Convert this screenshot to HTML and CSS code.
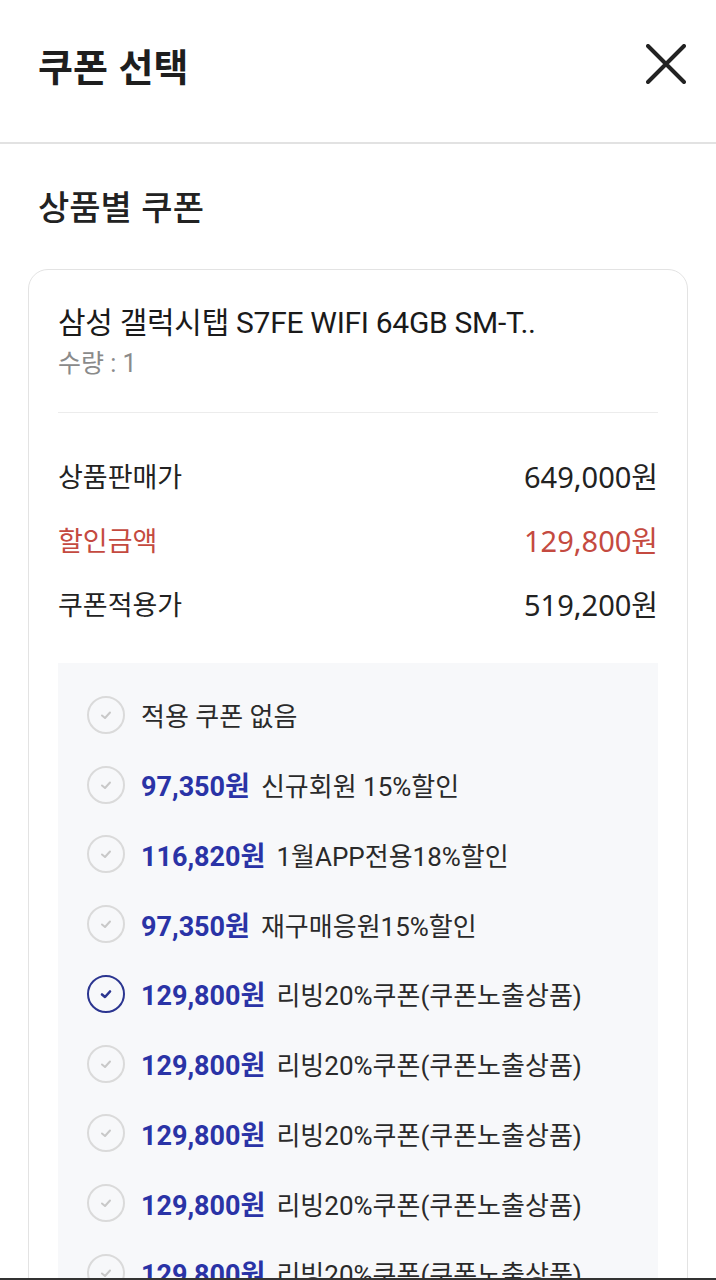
FILE: index.html
```html
<!DOCTYPE html>
<html lang="ko">
<head>
<meta charset="utf-8">
<title>쿠폰 선택</title>
<link rel="stylesheet" href="styles.css">
</head>
<body>
<header class="header">
  <h1 class="header-title">쿠폰 선택</h1>
  <button class="close-btn" aria-label="닫기">
    <svg width="40" height="40" viewBox="0 0 40 40"><path d="M2 2 L38 38 M38 2 L2 38" stroke="#222" stroke-width="4" stroke-linecap="round" fill="none"/></svg>
  </button>
</header>
<main class="content">
  <h2 class="section-title">상품별 쿠폰</h2>
  <section class="card">
    <div class="product">
      <div class="product-name">삼성 갤럭시탭 S7FE WIFI 64GB SM-T..</div>
      <div class="product-qty">수량 : 1</div>
    </div>
    <div class="prices">
      <div class="price-row"><span>상품판매가</span><span class="val">649,000원</span></div>
      <div class="price-row discount"><span>할인금액</span><span class="val">129,800원</span></div>
      <div class="price-row"><span>쿠폰적용가</span><span class="val">519,200원</span></div>
    </div>
    <ul class="coupons">
      <li class="coupon"><span class="check"><svg viewBox="0 0 20 20"><path d="M6 10.5 L9 13 L14 7.5"/></svg></span><span class="coupon-name">적용 쿠폰 없음</span></li>
      <li class="coupon"><span class="check"><svg viewBox="0 0 20 20"><path d="M6 10.5 L9 13 L14 7.5"/></svg></span><b class="amount">97,350원</b><span class="coupon-name">신규회원 15%할인</span></li>
      <li class="coupon"><span class="check"><svg viewBox="0 0 20 20"><path d="M6 10.5 L9 13 L14 7.5"/></svg></span><b class="amount">116,820원</b><span class="coupon-name">1월APP전용18%할인</span></li>
      <li class="coupon"><span class="check"><svg viewBox="0 0 20 20"><path d="M6 10.5 L9 13 L14 7.5"/></svg></span><b class="amount">97,350원</b><span class="coupon-name">재구매응원15%할인</span></li>
      <li class="coupon selected"><span class="check"><svg viewBox="0 0 20 20"><path d="M6 10.5 L9 13 L14 7.5"/></svg></span><b class="amount">129,800원</b><span class="coupon-name">리빙20%쿠폰(쿠폰노출상품)</span></li>
      <li class="coupon"><span class="check"><svg viewBox="0 0 20 20"><path d="M6 10.5 L9 13 L14 7.5"/></svg></span><b class="amount">129,800원</b><span class="coupon-name">리빙20%쿠폰(쿠폰노출상품)</span></li>
      <li class="coupon"><span class="check"><svg viewBox="0 0 20 20"><path d="M6 10.5 L9 13 L14 7.5"/></svg></span><b class="amount">129,800원</b><span class="coupon-name">리빙20%쿠폰(쿠폰노출상품)</span></li>
      <li class="coupon"><span class="check"><svg viewBox="0 0 20 20"><path d="M6 10.5 L9 13 L14 7.5"/></svg></span><b class="amount">129,800원</b><span class="coupon-name">리빙20%쿠폰(쿠폰노출상품)</span></li>
      <li class="coupon"><span class="check"><svg viewBox="0 0 20 20"><path d="M6 10.5 L9 13 L14 7.5"/></svg></span><b class="amount">129,800원</b><span class="coupon-name">리빙20%쿠폰(쿠폰노출상품)</span></li>
    </ul>
  </section>
</main>
<div class="nav-edge"></div>
</body>
</html>
```
FILE: styles.css
```css
* { box-sizing: border-box; }
html, body { margin: 0; padding: 0; }
body {
  width: 716px;
  height: 1280px;
  overflow: hidden;
  background: #fff;
  font-family: Roboto, "Noto Sans CJK KR", "Noto Sans", sans-serif;
  color: #222;
}
.header {
  height: 144px;
  border-bottom: 2px solid #e2e2e2;
  display: flex;
  align-items: center;
  justify-content: space-between;
  padding: 0 30px 14px 38px;
}
.header-title {
  margin: 0;
  font-family: "Noto Sans CJK KR", sans-serif;
  font-size: 38px;
  font-weight: 700;
  color: #1e1e1e;
}
.close-btn {
  border: 0;
  background: none;
  padding: 0;
  width: 40px;
  height: 40px;
  display: flex;
}
.content { padding-top: 42px; }
.section-title {
  margin: 0 0 43px 38px;
  font-family: "Noto Sans CJK KR", sans-serif;
  font-size: 34px;
  font-weight: 500;
  line-height: 40px;
  color: #222;
}
.card {
  margin: 0 28px;
  border: 1.5px solid #e3e3e3;
  border-radius: 20px;
  padding: 34px 29px 0;
  height: 1100px;
}
.product {
  padding-bottom: 31px;
  border-bottom: 1.5px solid #ececec;
}
.product-name {
  font-size: 30px;
  line-height: 38px;
  letter-spacing: -0.3px;
  color: #1a1a1a;
}
.product-qty {
  margin-top: 5px;
  font-size: 25px;
  line-height: 34px;
  color: #8a8a8a;
}
.prices { padding: 30px 0 28px; }
.price-row {
  height: 64px;
  display: flex;
  align-items: center;
  justify-content: space-between;
  font-size: 27px;
  color: #222;
}
.price-row .val { font-size: 29px; font-family: "Noto Sans", "Noto Sans CJK KR", sans-serif; }
.price-row.discount { color: #c44a40; }
.coupons {
  list-style: none;
  margin: 0;
  padding: 17px 0 0 29px;
  background: #f7f8fa;
}
.coupon {
  height: 69.75px;
  display: flex;
  align-items: center;
  font-size: 26px;
  color: #2a2a2a;
}
.check {
  width: 38px;
  height: 38px;
  border: 2px solid #dadada;
  border-radius: 50%;
  display: flex;
  align-items: center;
  justify-content: center;
  margin-right: 16px;
  flex: none;
}
.check svg {
  width: 20px;
  height: 20px;
  fill: none;
  stroke: #c8c8c8;
  stroke-width: 2;
  stroke-linecap: round;
  stroke-linejoin: round;
}
.selected .check { border-color: #2b3590; }
.selected .check svg { stroke: #2b3590; stroke-width: 2.6; }
.amount {
  color: #2a33a6;
  font-weight: 700;
  font-size: 27px;
  margin-right: 11px;
}
.nav-edge {
  position: fixed;
  left: 0;
  right: 0;
  bottom: 0;
  height: 2px;
  background: #333;
}
```
